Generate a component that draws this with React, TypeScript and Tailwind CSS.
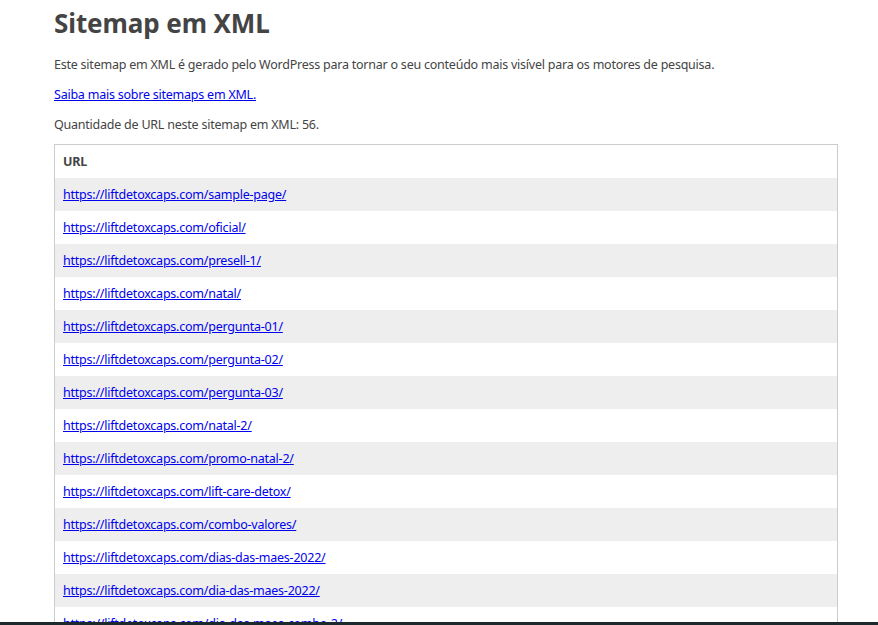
const base = "https://liftdetoxcaps.com/";

const paths = [
  "sample-page/",
  "oficial/",
  "presell-1/",
  "natal/",
  "pergunta-01/",
  "pergunta-02/",
  "pergunta-03/",
  "natal-2/",
  "promo-natal-2/",
  "lift-care-detox/",
  "combo-valores/",
  "dias-das-maes-2022/",
  "dia-das-maes-2022/",
  "dia-das-maes-combo-2/",
  "kit-detox/",
  "obrigado/",
];

export default function App() {
  return (
    <div
      className="min-h-screen bg-white text-[#444] text-[12.5px] tracking-[-0.23px]"
      style={{ fontFamily: '"Segoe UI", "Noto Sans", Roboto, sans-serif' }}
    >
      <div className="ml-[54px] w-[784px] flex flex-col">
        {/* Header */}
        <h1 className="mt-[6px] text-[26px] leading-[34px] font-bold tracking-[-0.1px] text-[#444]">
          Sitemap em XML
        </h1>
        <p className="mt-[16px] leading-[18px]">
          Este sitemap em XML é gerado pelo WordPress para tornar o seu conteúdo mais visível para os motores de pesquisa.
        </p>
        <p className="mt-[12px] leading-[18px]">
          <a href="#" className="text-[#0000ee] underline">
            Saiba mais sobre sitemaps em XML.
          </a>
        </p>
        <p className="mt-[12px] leading-[18px]">
          Quantidade de URL neste sitemap em XML: 56.
        </p>

        {/* Table */}
        <div className="mt-[10px] border border-[#ccc]">
          <div className="h-[33px] flex items-center px-2 pt-[1px] font-bold">URL</div>
          {paths.map((p, i) => (
            <div
              key={p}
              className={`h-[33px] flex items-center px-2 pt-[2px] ${i % 2 === 0 ? "bg-[#eee]" : "bg-white"}`}
            >
              <a href="#" className="text-[#0000ee] underline">
                {base + p}
              </a>
            </div>
          ))}
        </div>
      </div>

      {/* window edge strip */}
      <div className="fixed bottom-0 left-0 right-0 h-[3px] bg-[#1c2a2d]" />
    </div>
  );
}
